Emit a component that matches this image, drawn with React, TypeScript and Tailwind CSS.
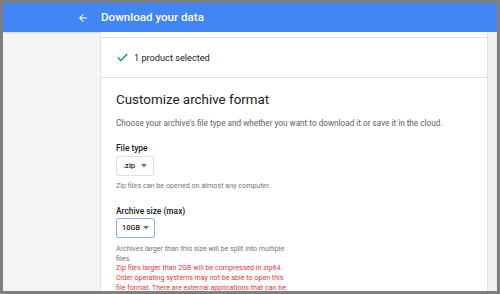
import React from "react";

function Caret() {
  return (
    <svg width="6" height="4" viewBox="0 0 6 4" className="ml-auto shrink-0">
      <path d="M0 0 L6 0 L3 3.5 Z" fill="#757575" />
    </svg>
  );
}

export default function App() {
  return (
    <div
      className="w-[500px] h-[294px] bg-[#7f7f7f] p-[3px] overflow-hidden"
      style={{ fontFamily: "Roboto, 'Liberation Sans', sans-serif" }}
    >
      <div className="w-full h-full flex flex-col bg-[#f5f5f5] overflow-hidden">
        <header className="h-[29px] shrink-0 bg-[#4285f4] flex items-center shadow-[0_1px_2px_rgba(0,0,0,0.15)]">
          <svg width="12" height="12" viewBox="0 0 24 24" className="ml-[74px]">
            <path d="M20 11H7.83l5.59-5.59L12 4l-8 8 8 8 1.41-1.41L7.83 13H20v-2z" fill="#ffffff" />
          </svg>
          <span className="ml-[12px] text-white text-[11.6px] font-medium leading-none">Download your data</span>
        </header>
        <div className="flex flex-1 min-h-0">
          <div className="w-[97px] shrink-0" />
          <div className="w-[388px] shrink-0 bg-white border-l border-r border-[#e3e3e3] flex flex-col overflow-hidden">
            <div className="h-[6px] shrink-0 border-b border-[#e0e0e0]" />
            <div className="h-[40px] shrink-0 border-b border-[#e0e0e0] flex items-center pl-[16px]">
              <svg width="11" height="9" viewBox="0 0 11 9" className="shrink-0">
                <path d="M0.8 4.6 L3.8 7.6 L10.2 1" stroke="#0f9d58" strokeWidth="1.4" fill="none" />
              </svg>
              <span className="ml-[6px] text-[9.2px] text-[#212121] leading-none">1 product selected</span>
            </div>
            <div className="px-[15px] pt-[14px] shrink-0">
              <div className="text-[13.4px] leading-[16px] text-[#212121]">Customize archive format</div>
              <div className="mt-[10px] text-[8.2px] leading-[10px] text-[#616161] whitespace-nowrap">
                Choose your archive's file type and whether you want to download it or save it in the cloud.
              </div>
              <div className="mt-[15px] text-[8.4px] leading-[10px] font-medium text-[#212121]">File type</div>
              <div className="mt-[3px] w-[38px] h-[20px] border border-[#e0e0e0] rounded-[2px] flex items-center px-[6px]">
                <span className="text-[7.6px] font-medium text-[#212121] leading-none">.zip</span>
                <Caret />
              </div>
              <div className="mt-[5px] text-[7.2px] leading-[9px] text-[#757575]">
                Zip files can be opened on almost any computer.
              </div>
              <div className="mt-[16px] text-[8.4px] leading-[10px] font-medium text-[#212121]">Archive size (max)</div>
              <div className="mt-[2px] w-[39px] h-[20px] border border-[#8ab4f8] rounded-[2px] flex items-center pl-[5px] pr-[5px]">
                <span className="text-[7.4px] font-medium text-[#212121] leading-none">10GB</span>
                <Caret />
              </div>
              <div className="mt-[6px] w-[172px] text-[7.1px] leading-[9.6px] text-[#757575]">
                Archives larger than this size will be split into multiple files.
              </div>
              <div className="w-[172px] text-[7.1px] leading-[9.8px] text-[#e53935]">
                Zip files larger than 2GB will be compressed in zip64. Older operating systems may not be able to open this file format. There are external applications that can be used to open these files.
              </div>
            </div>
          </div>
          <div className="flex-1 bg-[#f1f1f1] border-r border-[#e8e8e8]" />
        </div>
      </div>
    </div>
  );
}
